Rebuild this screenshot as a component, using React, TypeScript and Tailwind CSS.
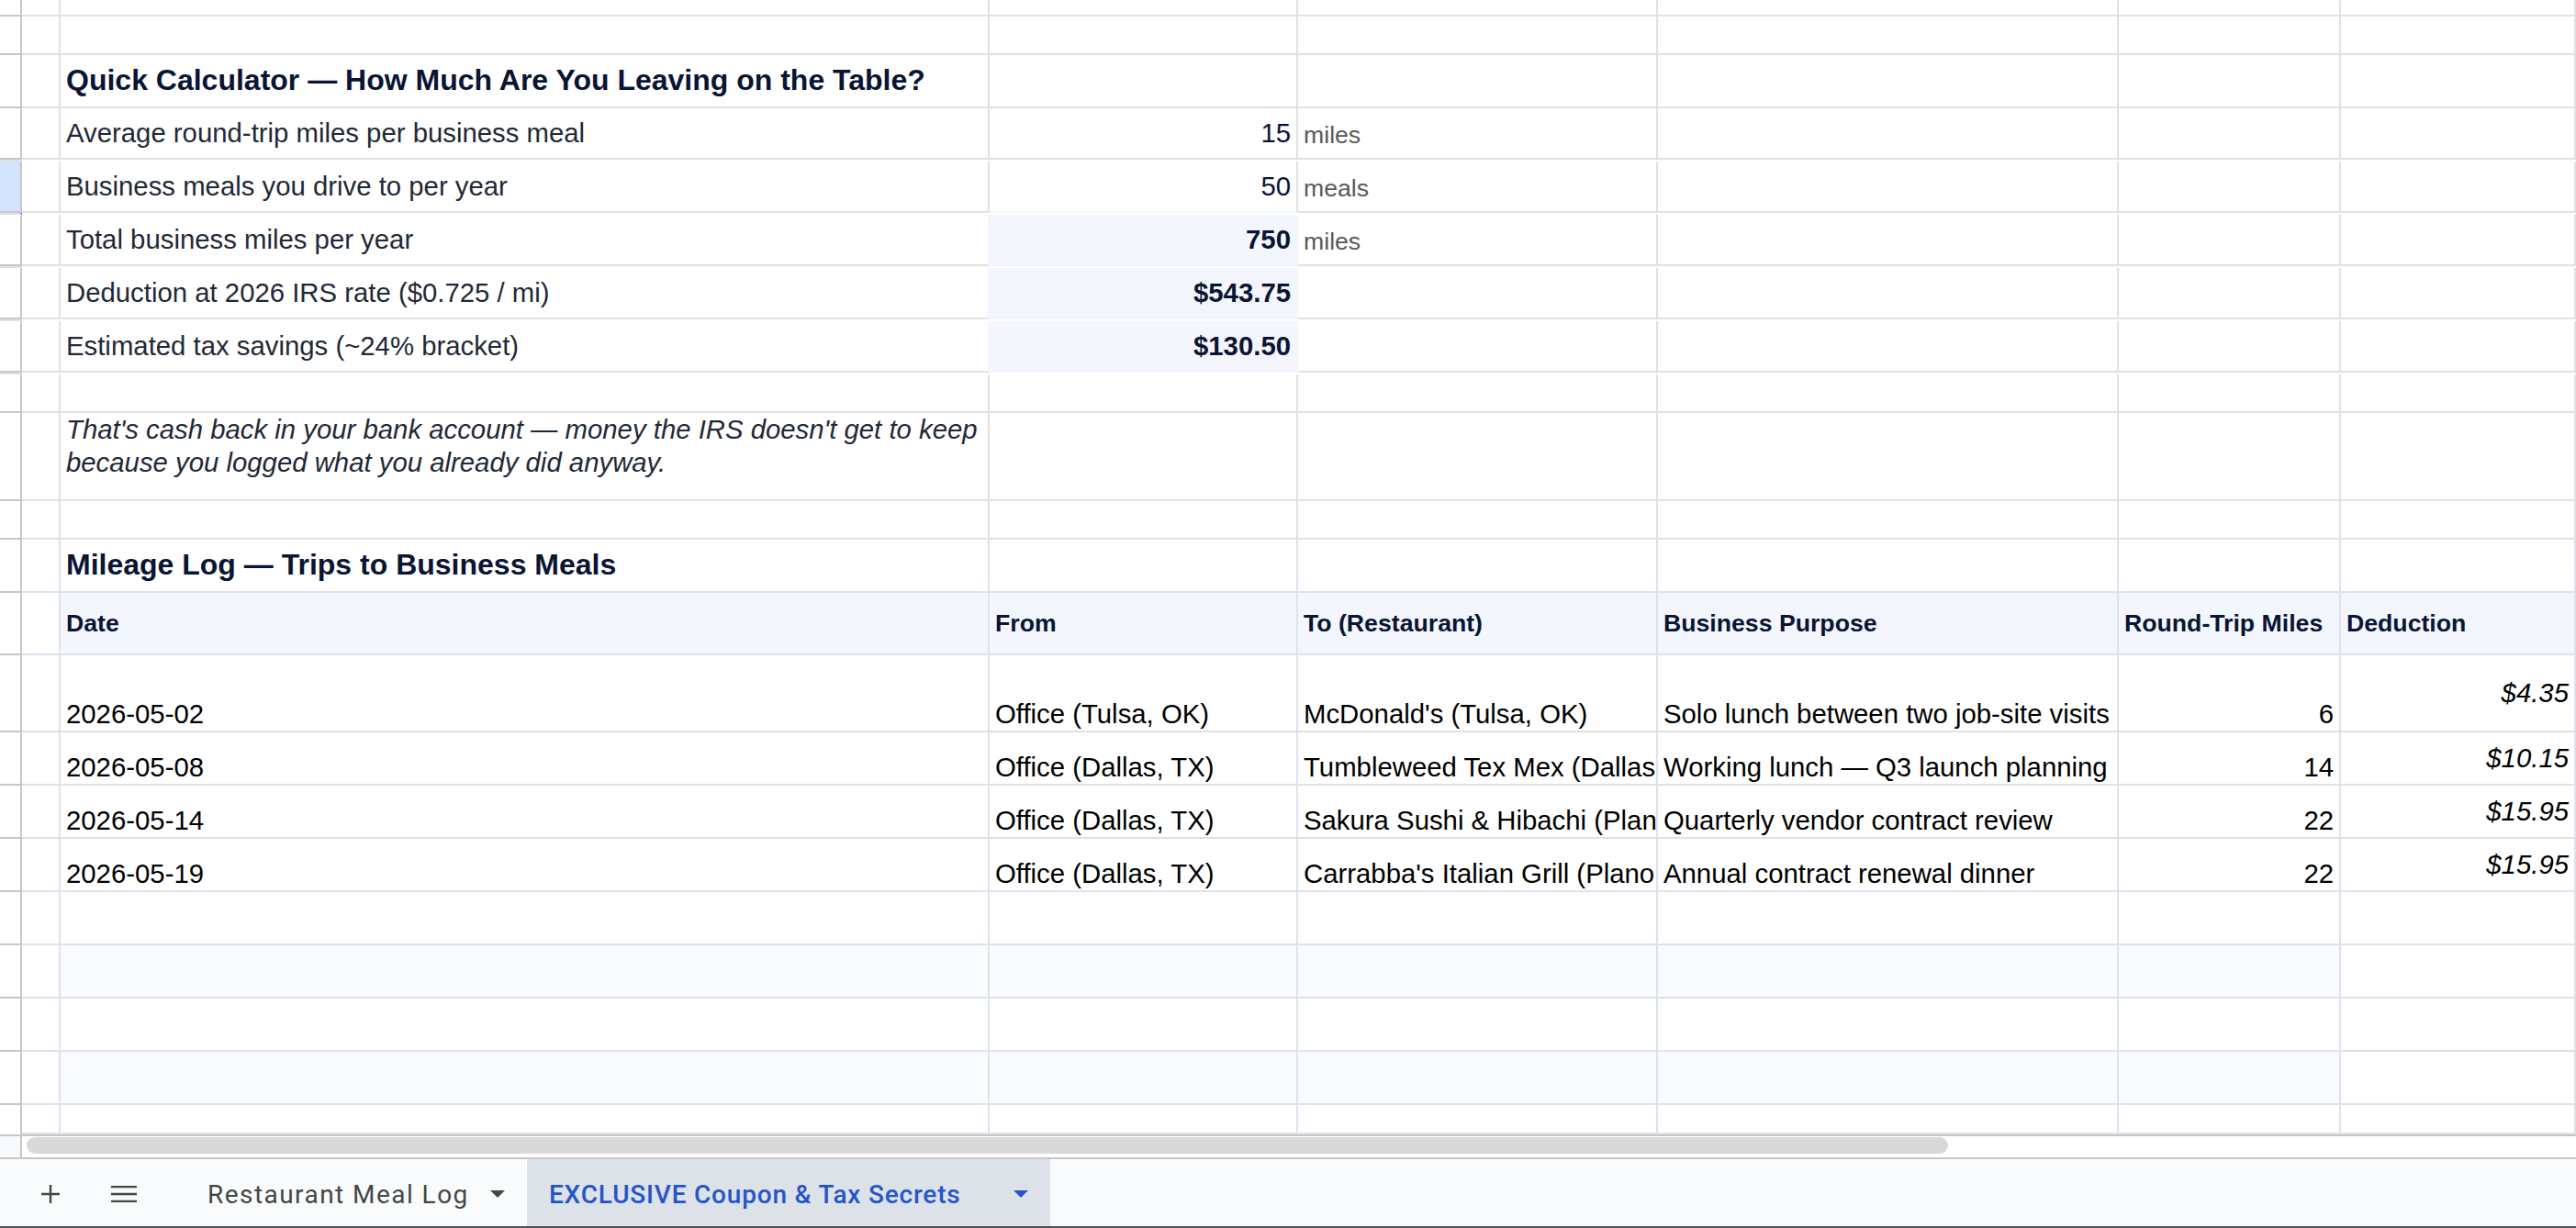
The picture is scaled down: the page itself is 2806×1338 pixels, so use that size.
import type { ReactNode } from "react";

const COLS = "grid grid-cols-[24px_42px_1012px_336px_392px_502px_242px_256px] grid-rows-[minmax(0,1fr)]";
const GRAY = "border-[#e1e1e1]";
const BLUE = "border-[#dce2ee]";
const SHADE = "border-[#f3f6fd]";

type CellProps = {
  children?: ReactNode;
  line?: string;
  right?: boolean;
  className?: string;
};

function Cell({ children, line = GRAY, right, className = "" }: CellProps) {
  return (
    <div
      className={`flex h-full min-w-0 overflow-hidden whitespace-nowrap border-r-2 border-b-2 ${line} ${
        right ? "justify-end pr-[6px]" : "pl-[6px]"
      } ${className}`}
    >
      {children}
    </div>
  );
}

function RowHead({ selected }: { selected?: boolean }) {
  return (
    <div
      className={`h-full border-r-2 border-b-2 border-[#c7c7c7] ${
        selected ? "bg-[#d3e3fd]" : ""
      }`}
    />
  );
}

const MID = "items-center";
const TITLE = "items-center pb-[2px] text-[32px] leading-[36px] font-bold text-[#0a1433]";
const LABEL = "items-center text-[29.33px] leading-[36px] text-[#1f2937]";
const UNIT = "items-center pt-[4px] text-[26.67px] leading-[36px] text-[#595959]";
const VALUE = "items-center text-[29.33px] leading-[36px] text-[#0a1433]";
const HEAD = "bg-[#f3f6fd] items-center text-[26.67px] leading-[36px] font-bold text-[#0a1433]";
const DATA = "items-end text-[29.33px] text-black leading-[36px]";

function Blank({ h, line = GRAY }: { h: string; line?: string }) {
  return (
    <div className={`${COLS} ${h}`}>
      <RowHead />
      <Cell line={line} />
      <Cell line={line} />
      <Cell line={line} />
      <Cell line={line} />
      <Cell line={line} />
      <Cell line={line} />
      <Cell line={line} />
    </div>
  );
}

const CALC = [
  { label: "Average round-trip miles per business meal", value: "15", unit: "miles" },
  { label: "Business meals you drive to per year", value: "50", unit: "meals", selected: true },
  { label: "Total business miles per year", value: "750", unit: "miles", filled: true },
  { label: "Deduction at 2026 IRS rate ($0.725 / mi)", value: "$543.75", unit: "", filled: true },
  { label: "Estimated tax savings (~24% bracket)", value: "$130.50", unit: "", filled: true },
];

const TRIPS = [
  ["2026-05-02", "Office (Tulsa, OK)", "McDonald's (Tulsa, OK)", "Solo lunch between two job-site visits", "6", "$4.35"],
  ["2026-05-08", "Office (Dallas, TX)", "Tumbleweed Tex Mex (Dallas, TX)", "Working lunch — Q3 launch planning", "14", "$10.15"],
  ["2026-05-14", "Office (Dallas, TX)", "Sakura Sushi & Hibachi (Plano, TX)", "Quarterly vendor contract review", "22", "$15.95"],
  ["2026-05-19", "Office (Dallas, TX)", "Carrabba's Italian Grill (Plano, TX)", "Annual contract renewal dinner", "22", "$15.95"],
];

function Band({ h, tinted, clipped }: { h: string; tinted?: boolean; clipped?: boolean }) {
  const bg = tinted ? "bg-[#fafbfe]" : "";
  const edge = clipped ? "border-b-0" : "";
  return (
    <div className={`${COLS} ${h}`}>
      {clipped ? <div className="h-full border-r-2 border-[#c7c7c7]" /> : <RowHead />}
      <Cell line={BLUE} className={edge} />
      <Cell line={BLUE} className={`${bg} ${edge}`} />
      <Cell line={BLUE} className={`${bg} ${edge}`} />
      <Cell line={BLUE} className={`${bg} ${edge}`} />
      <Cell line={BLUE} className={`${bg} ${edge}`} />
      <Cell line={BLUE} className={`${bg} ${edge}`} />
      <Cell className={edge} />
    </div>
  );
}

function Grid() {
  return (
    <div className="h-[1238px] overflow-hidden border-b-2 border-[#c7c7c7]">
      <Blank h="h-[18px]" />
      <Blank h="h-[42px]" />

      <div className={`${COLS} h-[58px]`}>
        <RowHead />
        <Cell />
        <Cell className={TITLE}>Quick Calculator — How Much Are You Leaving on the Table?</Cell>
        <Cell />
        <Cell />
        <Cell />
        <Cell />
        <Cell />
      </div>

      {CALC.map((row, i) => {
        // shaded result cells swallow the grid lines around them
        let valueLine = GRAY;
        if (row.filled) valueLine = SHADE;
        else if (i === 1) valueLine = "border-b-[#f3f6fd] border-r-[#e1e1e1]";
        return (
          <div key={row.label} className={`${COLS} h-[58px]`}>
            <RowHead selected={row.selected} />
            <Cell />
            <Cell line={row.filled ? "border-b-[#e1e1e1] border-r-[#f3f6fd]" : GRAY} className={LABEL}>
              {row.label}
            </Cell>
            <Cell
              right
              line={valueLine}
              className={`${VALUE} ${row.filled ? "bg-[#f3f6fd] font-bold" : ""}`}
            >
              {row.value}
            </Cell>
            <Cell className={UNIT}>{row.unit}</Cell>
            <Cell />
            <Cell />
            <Cell />
            <Cell line={row.selected ? "border-b-[#e1e1e1] border-r-[#3b5cc4]" : GRAY} />
          </div>
        );
      })}

      <Blank h="h-[42px]" />

      <div className={`${COLS} h-[96px]`}>
        <RowHead />
        <Cell />
        <Cell className="whitespace-normal pr-[4px] text-[29.33px] italic leading-[36px] text-[#1f2937]">
          <span>
            That's cash back in your bank account — money the IRS doesn't get to keep
            <br />
            because you logged what you already did anyway.
          </span>
        </Cell>
        <Cell />
        <Cell />
        <Cell />
        <Cell />
        <Cell />
      </div>

      <Blank h="h-[42px]" />

      <div className={`${COLS} h-[58px]`}>
        <RowHead />
        <Cell line={BLUE} />
        <Cell line={BLUE} className={TITLE}>Mileage Log — Trips to Business Meals</Cell>
        <Cell line={BLUE} />
        <Cell line={BLUE} />
        <Cell line={BLUE} />
        <Cell line={BLUE} />
        <Cell line={BLUE} />
      </div>

      <div className={`${COLS} h-[68px]`}>
        <RowHead />
        <Cell line={BLUE} />
        <Cell line={BLUE} className={HEAD}>Date</Cell>
        <Cell line={BLUE} className={HEAD}>From</Cell>
        <Cell line={BLUE} className={HEAD}>To (Restaurant)</Cell>
        <Cell line={BLUE} className={HEAD}>Business Purpose</Cell>
        <Cell line={BLUE} className={HEAD}>Round-Trip Miles</Cell>
        <Cell line={BLUE} className={HEAD}>Deduction</Cell>
      </div>

      {TRIPS.map((t, i) => {
        const last = i === TRIPS.length - 1;
        const line = last ? BLUE : "border-b-[#e1e1e1] border-r-[#dce2ee]";
        return (
          <div key={t[0]} className={`${COLS} ${i === 0 ? "h-[84px]" : "h-[58px]"}`}>
            <RowHead />
            <Cell line={line} />
            <Cell line={line} className={DATA}>{t[0]}</Cell>
            <Cell line={line} className={DATA}>{t[1]}</Cell>
            <Cell line={line} className={DATA}>{t[2]}</Cell>
            <Cell line={line} className={DATA}>{t[3]}</Cell>
            <Cell line={line} right className={DATA}>{t[4]}</Cell>
            <Cell line={line} right className={`${MID} text-[29.33px] leading-[36px] italic text-black`}>{t[5]}</Cell>
          </div>
        );
      })}

      <Band h="h-[58px]" />
      <Band h="h-[58px]" tinted />
      <Band h="h-[58px]" />
      <Band h="h-[58px]" tinted />
      <Band h="h-[32px]" clipped />
    </div>
  );
}

function Scrollbar() {
  return (
    <div className="flex h-[25px] border-b-2 border-[#c7c7c7]">
      <div className="w-[24px] border-r-2 border-[#c7c7c7] bg-[#f8f9fa]" />
      <div className="flex-1 pl-[5px] pt-[1px]">
        <div className="h-[18px] w-[2093px] rounded-full bg-[#d9d9d9]" />
      </div>
    </div>
  );
}

function Caret({ className }: { className: string }) {
  return (
    <svg viewBox="0 0 16 8" className={`h-[8px] w-[16px] ${className}`}>
      <path d="M0 0h16L8 8z" fill="currentColor" />
    </svg>
  );
}

function TabBar() {
  return (
    <div className="flex h-[75px] items-stretch border-b-2 border-[#4f5256] bg-[#f9fbfd] font-['Roboto',sans-serif] text-[28px] text-[#444746]">
      <div className="flex items-center pl-[45px] pt-[3px]">
        <svg viewBox="0 0 20 20" className="h-[20px] w-[20px]">
          <path d="M10 0v20M0 10h20" stroke="#444746" strokeWidth="2.4" fill="none" />
        </svg>
      </div>
      <div className="flex items-center pl-[56px] pt-[3px]">
        <svg viewBox="0 0 28 18" className="h-[18px] w-[28px]">
          <path d="M0 1h28M0 9h28M0 17h28" stroke="#444746" strokeWidth="2.4" fill="none" />
        </svg>
      </div>
      <div className="flex w-[425px] items-center pl-[77px] pt-[3px]">
        <span className="w-[308px] whitespace-nowrap pt-[2px] tracking-[1.45px]">Restaurant Meal Log</span>
        <Caret className="text-[#444746]" />
      </div>
      <div className="flex w-[570px] items-center bg-[#dde1e8] pl-[24px] pt-[3px] font-medium text-[#2456c8]">
        <span className="w-[506px] whitespace-nowrap pt-[2px] tracking-[0.8px]">EXCLUSIVE Coupon &amp; Tax Secrets</span>
        <Caret className="text-[#2456c8]" />
      </div>
    </div>
  );
}

export default function App() {
  return (
    <div className="h-[1338px] w-[2806px] overflow-hidden bg-white font-['Liberation_Sans',Arial,sans-serif]">
      <Grid />
      <Scrollbar />
      <TabBar />
    </div>
  );
}
